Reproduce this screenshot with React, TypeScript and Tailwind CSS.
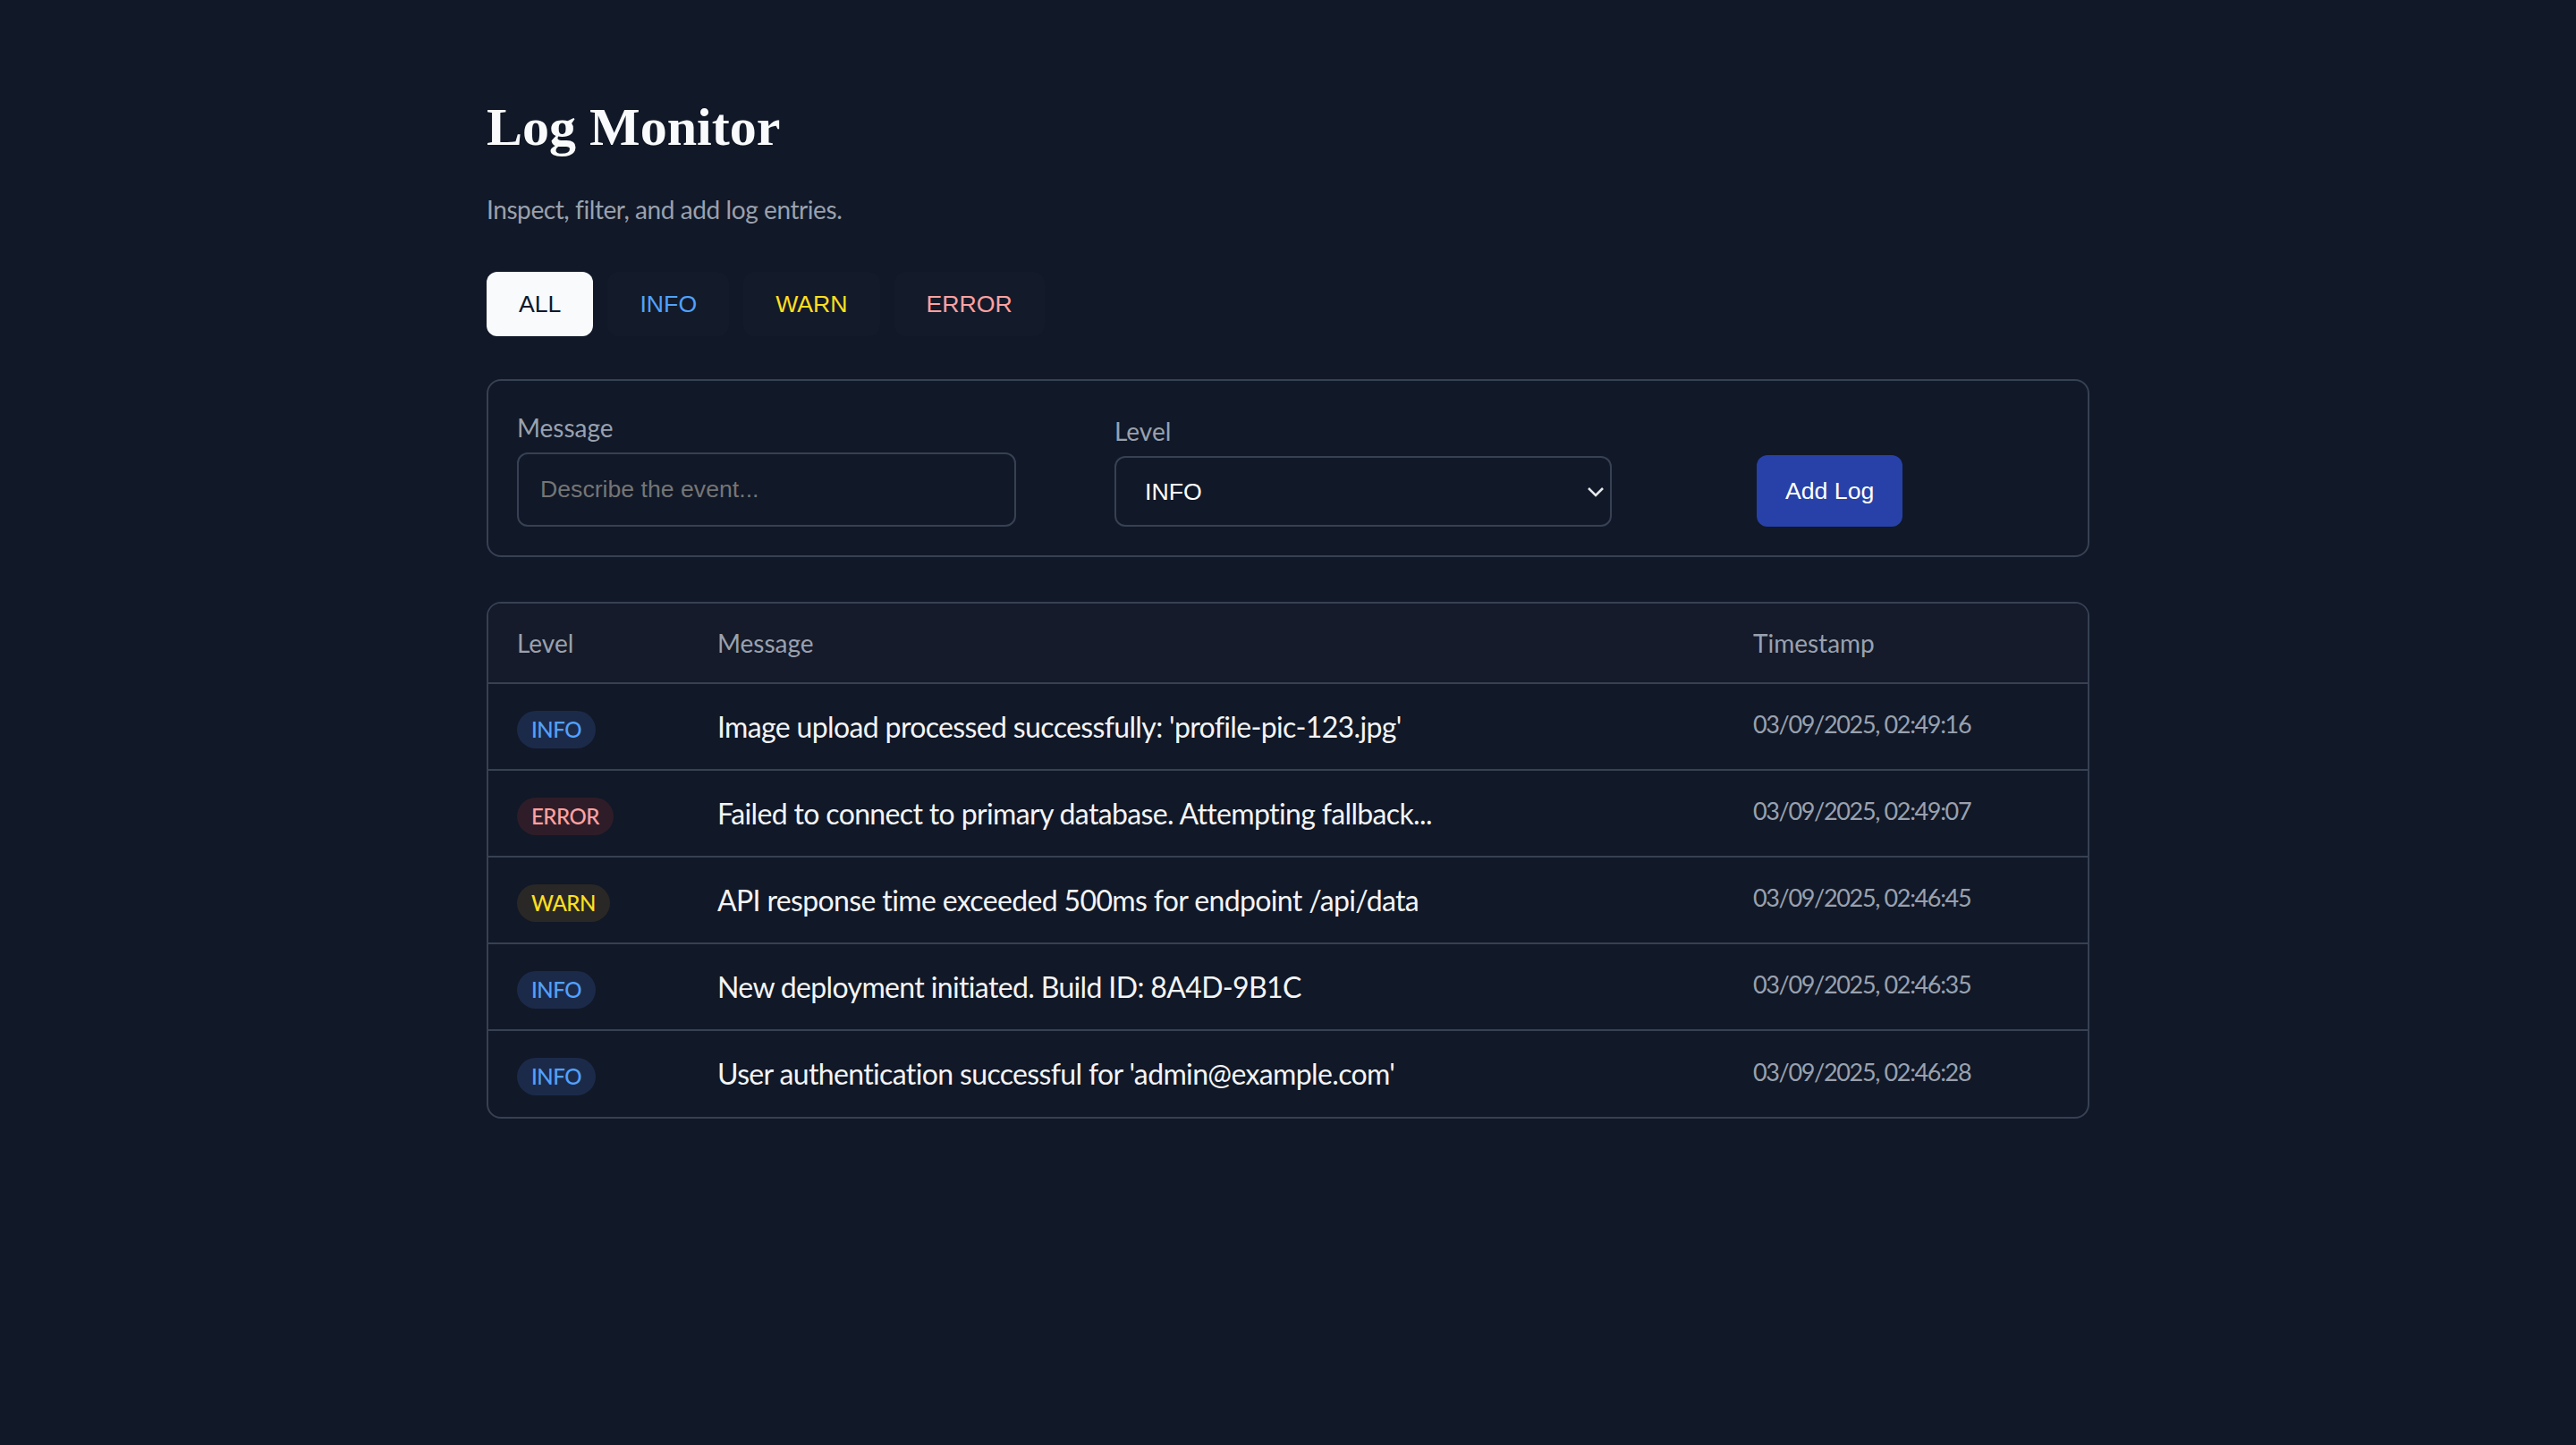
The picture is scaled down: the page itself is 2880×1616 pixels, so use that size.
import { useState } from "react";

type Level = "INFO" | "WARN" | "ERROR";

type Log = {
  level: Level;
  message: string;
  time: string;
};

const initialLogs: Log[] = [
  { level: "INFO", message: "Image upload processed successfully: 'profile-pic-123.jpg'", time: "03/09/2025, 02:49:16" },
  { level: "ERROR", message: "Failed to connect to primary database. Attempting fallback...", time: "03/09/2025, 02:49:07" },
  { level: "WARN", message: "API response time exceeded 500ms for endpoint /api/data", time: "03/09/2025, 02:46:45" },
  { level: "INFO", message: "New deployment initiated. Build ID: 8A4D-9B1C", time: "03/09/2025, 02:46:35" },
  { level: "INFO", message: "User authentication successful for 'admin@example.com'", time: "03/09/2025, 02:46:28" },
];

const filters = ["ALL", "INFO", "WARN", "ERROR"] as const;

const filterText: Record<string, string> = {
  ALL: "text-gray-100",
  INFO: "text-blue-400",
  WARN: "text-yellow-300",
  ERROR: "text-red-300",
};

const badgeStyle: Record<Level, string> = {
  INFO: "bg-[#1c2a4a] text-blue-400",
  WARN: "bg-[#2a2826] text-yellow-300",
  ERROR: "bg-[#2e1d28] text-red-300",
};

const App = () => {
  const [filter, setFilter] = useState<string>("ALL");
  const [logs, setLogs] = useState<Log[]>(initialLogs);
  const [message, setMessage] = useState("");
  const [level, setLevel] = useState<Level>("INFO");

  const visible = filter === "ALL" ? logs : logs.filter((l) => l.level === filter);

  const addLog = () => {
    if (!message.trim()) return;
    const time = new Date().toLocaleString("en-GB", { hour12: false });
    setLogs([{ level, message, time }, ...logs]);
    setMessage("");
  };

  return (
    <div className="min-h-screen bg-[#111827]">
      <div className="[zoom:2] font-['Lato',sans-serif]">
        <div className="mx-auto max-w-4xl pt-[53px] pb-16">
          <h1 className="font-['Liberation_Serif',serif] text-3xl leading-9 font-bold text-gray-50">
            Log Monitor
          </h1>
          <p className="mt-[18px] text-sm tracking-[-0.015em] text-gray-400">Inspect, filter, and add log entries.</p>

          <div className="mt-[25px] flex gap-2">
            {filters.map((f) => (
              <button
                key={f}
                onClick={() => setFilter(f)}
                className={
                  filter === f
                    ? "h-9 rounded-md bg-slate-50 px-[18px] font-['Liberation_Sans',sans-serif] text-[13.333px] text-gray-900"
                    : `h-9 rounded-md bg-[#131a29] px-[18px] font-['Liberation_Sans',sans-serif] text-[13.333px] ${filterText[f]}`
                }
              >
                {f}
              </button>
            ))}
          </div>

          <div className="mt-6 rounded-lg border border-gray-700 p-4">
            <div className="flex items-end">
              <label className="flex w-[279px] flex-col">
                <span className="mb-1 text-sm leading-5 text-gray-400">Message</span>
                <input
                  value={message}
                  onChange={(e) => setMessage(e.target.value)}
                  placeholder="Describe the event..."
                  className="h-[41.5px] rounded-md border border-gray-700 bg-transparent px-3 font-['Liberation_Sans',sans-serif] text-[13.333px] text-gray-100 outline-none placeholder:text-[#757575]"
                />
              </label>
              <label className="ml-[55px] flex w-[278px] flex-col">
                <span className="mb-1 text-sm leading-5 text-gray-400">Level</span>
                <div className="relative">
                  <select
                    value={level}
                    onChange={(e) => setLevel(e.target.value as Level)}
                    className="h-[39.5px] w-full appearance-none rounded-md border border-gray-700 bg-transparent pl-4 font-['Liberation_Sans',sans-serif] text-[13.333px] text-white outline-none"
                  >
                    <option value="INFO">INFO</option>
                    <option value="WARN">WARN</option>
                    <option value="ERROR">ERROR</option>
                  </select>
                  <svg
                    className="pointer-events-none absolute top-1/2 right-1 h-[6px] w-[10px] -translate-y-1/2 text-gray-200"
                    viewBox="0 0 10 6"
                    fill="none"
                    stroke="currentColor"
                    strokeWidth="1.3"
                  >
                    <path d="M1 1l4 4 4-4" />
                  </svg>
                </div>
              </label>
              <button
                onClick={addLog}
                className="ml-[81px] h-10 rounded-md bg-[#2741a8] px-4 font-['Liberation_Sans',sans-serif] text-[13.333px] text-white"
              >
                Add Log
              </button>
            </div>
          </div>

          <div className="mt-[25px] overflow-hidden rounded-lg border border-gray-700">
            <table className="w-full table-fixed border-collapse text-left">
              <thead className="bg-[#151b2a]">
                <tr className="border-b border-gray-700">
                  <th className="w-[112px] px-4 py-3 text-sm leading-5 font-normal text-gray-400">Level</th>
                  <th className="px-4 py-3 text-sm leading-5 font-normal text-gray-400">Message</th>
                  <th className="w-[203px] px-4 py-3 text-sm leading-5 font-normal text-gray-400">Timestamp</th>
                </tr>
              </thead>
              <tbody className="divide-y divide-gray-700">
                {visible.map((log, i) => (
                  <tr key={i} className="h-[48.5px]">
                    <td className="px-4">
                      <span
                        className={`inline-flex rounded-full px-2 py-[2.5px] text-xs leading-4 font-medium tracking-[-0.02em] ${badgeStyle[log.level]}`}
                      >
                        {log.level}
                      </span>
                    </td>
                    <td className="px-4 text-base tracking-[-0.02em] text-gray-100">{log.message}</td>
                    <td className="px-4 pb-[2px] text-[13.5px] tracking-[-0.05em] text-gray-400">{log.time}</td>
                  </tr>
                ))}
              </tbody>
            </table>
          </div>
        </div>
      </div>
    </div>
  );
};

export default App;
